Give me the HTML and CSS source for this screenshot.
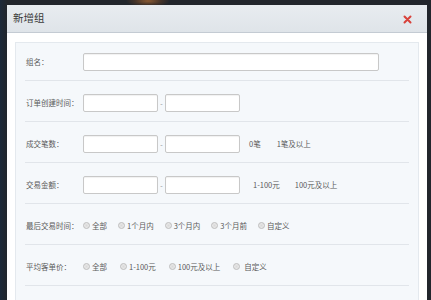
FILE: index.html
```html
<!DOCTYPE html>
<html lang="zh">
<head>
<meta charset="utf-8">
<title>新增组</title>
<link rel="stylesheet" href="styles.css">
</head>
<body>
<div class="dialog">
  <div class="titlebar">
    <span class="title">新增组</span>
    <span class="close" aria-label="关闭">
      <svg width="9" height="9" viewBox="0 0 9 9"><path d="M1.5 1.5 L7.5 7.5 M7.5 1.5 L1.5 7.5" stroke="#d8413a" stroke-width="2" stroke-linecap="round"/></svg>
    </span>
  </div>
  <div class="body">
    <div class="panel">
      <div class="row row-first">
        <span class="label">组名：</span>
        <span class="input input-wide"></span>
      </div>
      <div class="row">
        <span class="label">订单创建时间：</span>
        <span class="input input-short"></span>
        <span class="dash">-</span>
        <span class="input input-short"></span>
      </div>
      <div class="row">
        <span class="label">成交笔数：</span>
        <span class="input input-short"></span>
        <span class="dash">-</span>
        <span class="input input-short"></span>
        <span class="opt opt-a">0笔</span>
        <span class="opt opt-b">1笔及以上</span>
      </div>
      <div class="row">
        <span class="label">交易金额：</span>
        <span class="input input-short"></span>
        <span class="dash">-</span>
        <span class="input input-short"></span>
        <span class="opt opt-c">1-100元</span>
        <span class="opt opt-d">100元及以上</span>
      </div>
      <div class="row">
        <span class="label">最后交易时间：</span>
        <div class="radios radios-5">
          <span class="radio"><i class="dot"></i>全部</span>
          <span class="radio"><i class="dot"></i>1个月内</span>
          <span class="radio"><i class="dot"></i>3个月内</span>
          <span class="radio"><i class="dot"></i>3个月前</span>
          <span class="radio"><i class="dot"></i>自定义</span>
        </div>
      </div>
      <div class="row">
        <span class="label">平均客单价：</span>
        <div class="radios radios-6">
          <span class="radio"><i class="dot"></i>全部</span>
          <span class="radio"><i class="dot"></i>1-100元</span>
          <span class="radio"><i class="dot"></i>100元及以上</span>
          <span class="radio radio-sp"><i class="dot"></i>自定义</span>
        </div>
      </div>
    </div>
  </div>
</div>
</body>
</html>
```
FILE: styles.css
```css
html, body {
  margin: 0;
  padding: 0;
  height: 100%;
  overflow: hidden;
}
body {
  background:
    radial-gradient(ellipse 22px 6px at 148px 1px, #8a5a33 0%, rgba(90,60,40,0.6) 60%, rgba(34,38,43,0) 100%),
    linear-gradient(to right, #1d2a3a 0, #22262c 7px, #22262c 100%);
  font-family: "Noto Sans CJK SC", "Noto Sans", sans-serif;
  padding: 5px 4px 0 7px;
  box-sizing: border-box;
}
.dialog {
  background: #ffffff;
  height: 295px;
  width: 420px;
  display: flex;
  flex-direction: column;
  overflow: hidden;
}
.titlebar {
  flex: none;
  height: 27px;
  background: linear-gradient(#e8ecf0, #dfe4e9);
  border-bottom: 1px solid #c4cbd3;
  display: flex;
  align-items: center;
  justify-content: space-between;
  padding: 0 15px 0 6px;
}
.title {
  font-size: 10.5px;
  color: #3a3a3a;
  line-height: 1;
}
.close {
  display: flex;
  width: 9px;
  height: 9px;
  margin-top: 1px;
}
.body {
  flex: 1;
  display: flex;
  flex-direction: column;
  padding: 9px 8px 0 8px;
  min-height: 0;
}
.panel {
  flex: 1;
  background: #f5f8fb;
  border: 1px solid #e4e9ee;
  border-bottom: none;
  padding: 0 9px;
}
.row {
  height: 41px;
  box-sizing: border-box;
  border-bottom: 1px solid #e1e5ea;
  display: flex;
  align-items: center;
  padding: 3px 0 0 1px;
  font-size: 7.5px;
  color: #5a5a5a;
}
.row-first {
  height: 38px;
  padding-top: 0;
}
.label {
  width: 57px;
  flex: none;
  white-space: nowrap;
}
.input {
  display: block;
  height: 18px;
  box-sizing: border-box;
  background: #ffffff;
  border: 1px solid #c8c8c8;
  border-radius: 2px;
  box-shadow: inset 0 1px 1px rgba(0,0,0,0.06);
  flex: none;
}
.input-wide { width: 296px; }
.input-short { width: 75px; }
.dash {
  width: 7px;
  text-align: center;
  color: #888;
  font-size: 7px;
}
.opt { white-space: nowrap; }
.opt-a { margin-left: 9px; }
.opt-b { margin-left: 16px; }
.opt-c { margin-left: 13px; }
.opt-d { margin-left: 15px; }
.radios {
  display: flex;
  align-items: center;
}
.radios-5 { gap: 11px; }
.radios-6 { gap: 13px; }
.radio {
  display: flex;
  align-items: center;
  white-space: nowrap;
}
.dot {
  width: 5px;
  height: 5px;
  border: 1px solid #bdbdbd;
  border-radius: 50%;
  background: radial-gradient(circle, #d9d9d9 0, #e9e9e9 70%);
  margin-right: 2px;
  flex: none;
}
.radio-sp .dot { margin-right: 4px; }
```
